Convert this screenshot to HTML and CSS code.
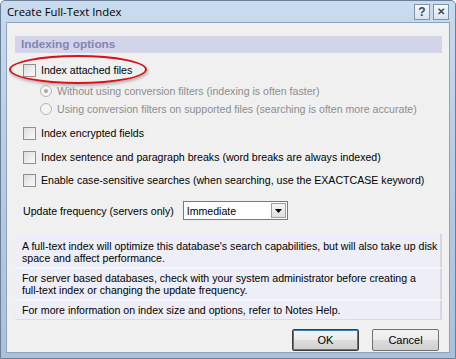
FILE: index.html
```html
<!DOCTYPE html>
<html lang="en">
<head>
  <meta charset="UTF-8" />
  <title>Create Full-Text Index</title>
  <link rel="stylesheet" href="styles.css">
</head>
<body>
  <div class="window">
    <div class="titlebar">
      <span class="title">Create Full-Text Index</span>
      <span class="tbtn">?</span>
      <span class="tbtn close">&#x2715;</span>
    </div>

    <div class="content">
      <div class="band">Indexing options</div>

      <div class="opts">
        <div class="row first">
          <span class="check"></span>Index attached files
          <span class="mark"></span>
        </div>
        <div class="row sub dim r1"><span class="radio on"></span>Without using conversion filters (indexing is often faster)</div>
        <div class="row sub dim"><span class="radio"></span>Using conversion filters on supported files (searching is often more accurate)</div>
        <div class="row gap"><span class="check"></span>Index encrypted fields</div>
        <div class="row gap"><span class="check"></span>Index sentence and paragraph breaks (word breaks are always indexed)</div>
        <div class="row gap last"><span class="check"></span>Enable case-sensitive searches (when searching, use the EXACTCASE keyword)</div>
        <div class="freq">
          <span>Update frequency (servers only)</span>
          <div class="select">
            <span class="value">Immediate</span>
            <span class="drop"><svg width="7" height="4" viewBox="0 0 7 4"><path d="M0 0h7L3.5 4z" fill="#000"/></svg></span>
          </div>
        </div>
      </div>

      <div class="info">
        <p>A full-text index will optimize this database's search capabilities, but will also take up disk<br>space and affect performance.</p>
        <p>For server based databases, check with your system administrator before creating a<br>full-text index or changing the update frequency.</p>
        <p>For more information on index size and options, refer to Notes Help.</p>
      </div>

      <div class="buttons">
        <button class="btn default">OK</button>
        <button class="btn">Cancel</button>
      </div>
    </div>
  </div>
</body>
</html>
```

FILE: styles.css
```css
body { margin: 0; font-family: 'Liberation Sans', Arial, sans-serif; font-size: 10.6px; color: #000; }
.window { width: 456px; height: 359px; box-sizing: border-box; border: 1px solid #6b7f96; border-radius: 5px 5px 0 0; background: linear-gradient(#c9dbee, #b9cde3 40%, #aac1db); padding: 0 5px 5px 5px; display: flex; flex-direction: column; }
.titlebar { height: 21px; flex: none; display: flex; align-items: center; gap: 3px; }
.title { flex: 1; font-family: 'Open Sans', sans-serif; font-size: 11.3px; padding-left: 1px; }
.tbtn { width: 14px; height: 14px; border: 1px solid #7d93ae; background: linear-gradient(#f4f7fb, #d9e3ef); font-size: 12px; font-weight: bold; color: #3a4a5c; display: flex; align-items: center; justify-content: center; line-height: 1; }
.tbtn.close { font-size: 10px; margin-right: 1px; }

.content { flex: 1; background: #f0f0f0; border: 1px solid #8ea3bd; padding: 13px 7px 0 8px; }
.band { height: 17px; background: #d3d3e9; color: #8383b5; font-weight: bold; font-size: 11.8px; line-height: 17px; padding-left: 6px; }

.opts { padding-left: 8px; }
.row { position: relative; display: flex; align-items: center; height: 18px; }
.row.first { margin-top: 8px; }
.row.r1 { margin-top: 3px; }
.row.gap { margin-top: 6px; }
.row.gap.last { margin-top: 5px; }
.sub { padding-left: 17px; }
.dim { color: #8d8d8d; }
.check { width: 11px; height: 11px; border: 1px solid #8f8f8f; background: linear-gradient(135deg, #dcdcdc, #fbfbfb); margin-right: 5px; flex: none; }
.radio { width: 10px; height: 10px; border: 1px solid #b4b4b4; border-radius: 50%; background: #f4f4f4; margin-right: 5px; flex: none; position: relative; }
.radio.on::after { content: ""; position: absolute; left: 3px; top: 3px; width: 4px; height: 4px; border-radius: 50%; background: #a8a8a8; }
.mark { position: absolute; left: -14px; top: -6px; width: 134px; height: 25px; border: 2px solid #d8121a; border-radius: 50%; box-shadow: 1px 2px 3px rgba(0,0,0,0.25); }

.freq { display: flex; align-items: center; margin-top: 12px; gap: 9px; }
.select { width: 103px; height: 17px; border: 1px solid #7a7a7a; background: #fff; display: flex; align-items: center; }
.value { flex: 1; padding-left: 3px; }
.drop { width: 15px; height: 15px; margin-right: 1px; box-sizing: border-box; border: 1px solid #a0a0a0; background: linear-gradient(#f6f6f6, #dedede); display: flex; align-items: center; justify-content: center; }

.info { margin-top: 14px; background: #eeeef8; border-bottom: 1px solid #dcdce4; }
.info p { margin: 0; padding: 3px 2px 3px 7px; line-height: 12px; white-space: nowrap; border-right: 2px solid #d6d6dc; border-top: 2px solid #f7f7fb; }
.info p:first-child { border-top: none; padding-top: 6px; }
.info p:last-child { padding-bottom: 3px; }

.buttons { display: flex; justify-content: flex-end; gap: 13px; margin-top: 9px; padding-right: 3px; }
.btn { width: 67px; height: 22px; font-family: inherit; font-size: 11px; border: 1px solid #707070; border-radius: 2px; background: linear-gradient(#f2f2f2, #ebebeb 50%, #dddddd 51%, #cfcfcf); padding: 0; }
.btn.default { box-shadow: inset 0 0 0 1px #3c7fb1; border-color: #3c3c3c; }
```
